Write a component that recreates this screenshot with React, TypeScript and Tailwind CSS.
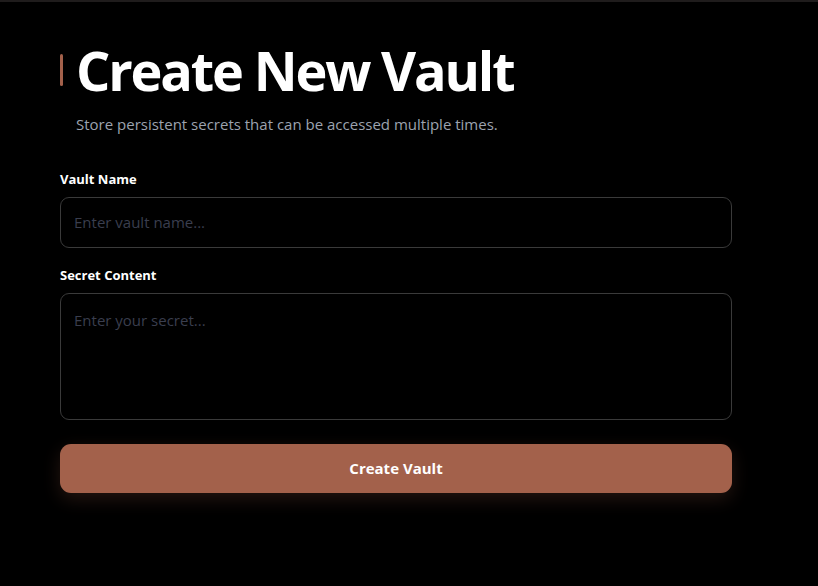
import { useState } from 'react';

export default function App() {
  const [name, setName] = useState('');
  const [secret, setSecret] = useState('');

  return (
    <div className="min-h-[586px] bg-black font-['Open_Sans',sans-serif]">
      <div className="h-[2px] bg-[#1f1c1c]" />
      <div className="w-[672px] ml-[60px] pt-[38px]">
        <div className="flex items-center gap-[13px]">
          <div className="w-[3px] h-[32px] bg-[#a3614b] rounded-full" />
          <h1 className="text-[54px] leading-[60px] font-bold text-white tracking-[-0.04em]">Create New Vault</h1>
        </div>
        <p className="mt-[13px] ml-[16px] text-[15px] text-[#9ca3af]">Store persistent secrets that can be accessed multiple times.</p>

        <form className="mt-[34px] flex flex-col" onSubmit={(e) => e.preventDefault()}>
          <label className="text-[13px] font-bold text-white leading-[18px]">Vault Name</label>
          <input
            type="text"
            value={name}
            onChange={(e) => setName(e.target.value)}
            placeholder="Enter vault name..."
            className="mt-[9px] h-[51px] px-[13px] bg-black border border-[#3a3a3a] rounded-[9px] text-[15px] text-white placeholder:text-[#3a3e4e] outline-none"
          />
          <label className="mt-[18px] text-[13px] font-bold text-white leading-[18px]">Secret Content</label>
          <textarea
            value={secret}
            onChange={(e) => setSecret(e.target.value)}
            placeholder="Enter your secret..."
            className="mt-[9px] h-[127px] px-[13px] py-[15px] bg-black border border-[#3a3a3a] rounded-[9px] text-[15px] text-white placeholder:text-[#3a3e4e] outline-none resize-none"
          />
          <button
            type="submit"
            className="mt-[24px] h-[49px] rounded-[11px] bg-[#a3614b] text-white text-[15px] font-bold shadow-[0_6px_18px_rgba(163,97,75,0.22)]"
          >
            Create Vault
          </button>
        </form>
      </div>
    </div>
  );
}
